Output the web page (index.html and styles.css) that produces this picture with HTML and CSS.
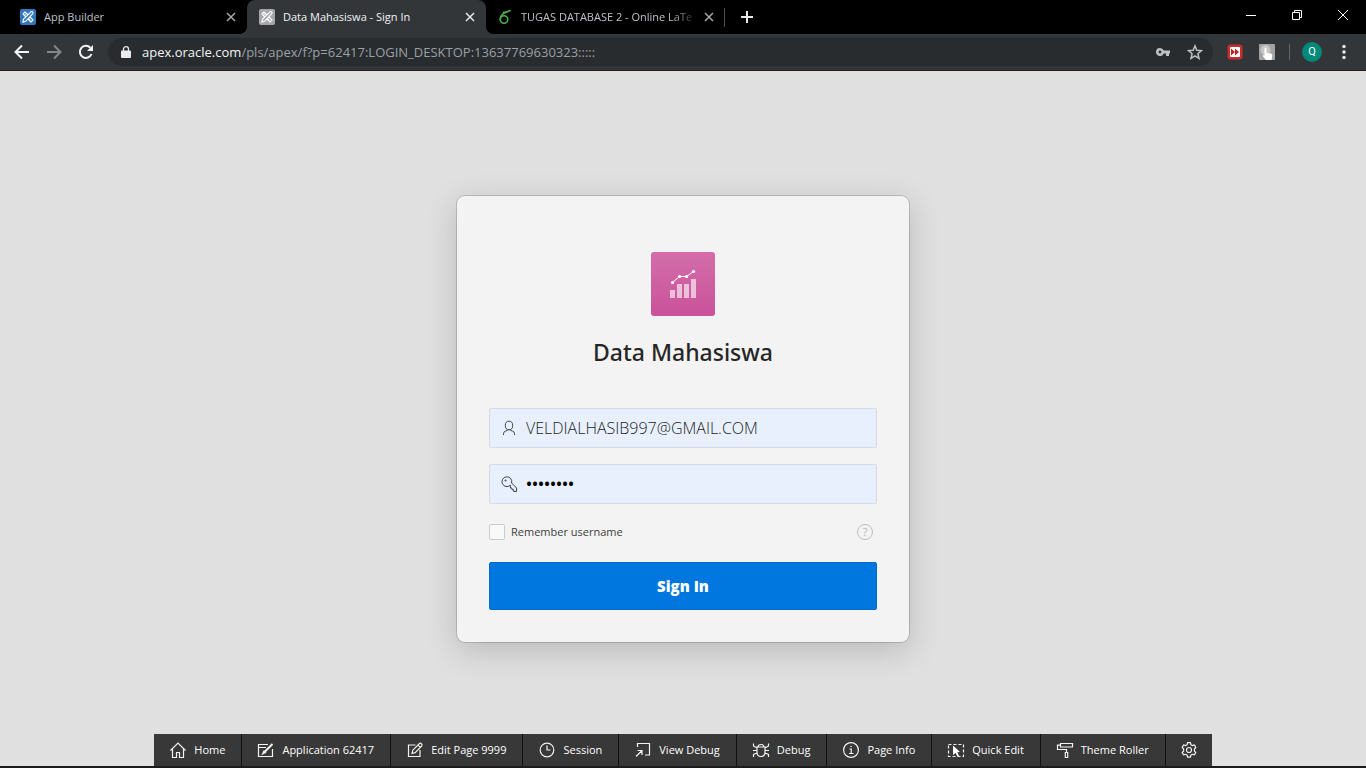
FILE: index.html
```html
<!DOCTYPE html>
<html lang="en">
<head>
<meta charset="utf-8">
<title>Data Mahasiswa - Sign In</title>
<link rel="stylesheet" href="styles.css">
</head>
<body>
<svg class="defs" aria-hidden="true">
  <defs>
    <symbol id="apex" viewBox="0 0 16 16">
      <rect width="16" height="16" rx="2" fill="currentColor"/>
      <g fill="none" stroke="#fff" stroke-width="1.1" stroke-linejoin="round">
        <path d="M3 5l2-2 8 8-2 2z"/>
        <path d="M4.6 6.4l1-1M6.600 8.400l1-1M9 11l1-1"/>
        <path fill="currentColor" d="M2.800 13.200l.8-3L11 2.800q1-.6 1.700.1t.1 1.800L5.600 12.300z"/>
      </g>
    </symbol>
    <symbol id="close" viewBox="0 0 10 10"><path d="M1 1l8 8M9 1L1 9" fill="none" stroke="currentColor" stroke-width="1.500"/></symbol>
  </defs>
</svg>
<header class="browser">
  <div class="tabstrip">
    <div class="tabs">
      <div class="tab"><svg class="favicon favicon-blue"><use href="#apex"/></svg><span class="tab-title">App Builder</span><button class="tab-close" aria-label="Close App Builder"><svg><use href="#close"/></svg></button></div>
      <div class="tab tab-active"><svg class="favicon favicon-grey"><use href="#apex"/></svg><span class="tab-title">Data Mahasiswa - Sign In</span><button class="tab-close" aria-label="Close Data Mahasiswa"><svg><use href="#close"/></svg></button></div>
      <div class="tab tab-last"><svg class="favicon" viewBox="0 0 16 16" fill="none" stroke="#4caf46" stroke-width="1.600" stroke-linecap="round"><path d="M13 1.500Q9 4 6.500 3.200M11 2.500Q3.500 4.500 3.200 10.200"/><ellipse cx="7" cy="10.500" rx="3.800" ry="3.700"/></svg><span class="tab-title tab-fade">TUGAS DATABASE 2 - Online LaTe</span><button class="tab-close" aria-label="Close TUGAS DATABASE 2"><svg><use href="#close"/></svg></button></div>
      <button class="new-tab" aria-label="New tab"><svg viewBox="0 0 12 12" fill="none" stroke="#e8eaed" stroke-width="2"><path d="M6 0v12M0 6h12"/></svg></button>
    </div>
    <div class="window-controls">
      <button aria-label="Minimize"><svg viewBox="0 0 10 10"><path d="M0 5.500h10"/></svg></button>
      <button aria-label="Restore"><svg viewBox="0 0 10 10"><path d="M.5 2.500h7v7h-7zM2.500 2.500v-2h7v7h-2"/></svg></button>
      <button aria-label="Close window"><svg viewBox="0 0 10 10"><path d="M0 0l10 10M10 0L0 10"/></svg></button>
    </div>
  </div>
  <div class="toolbar">
    <button class="nav" aria-label="Back"><svg viewBox="0 0 16 16"><path d="M15 8H2M8 1.500L1.500 8 8 14.500"/></svg></button>
    <button class="nav nav-off" aria-label="Forward"><svg viewBox="0 0 16 16"><path d="M1 8h13M8 1.500L14.500 8 8 14.500"/></svg></button>
    <button class="nav" aria-label="Reload"><svg viewBox="0 0 16 16"><path d="M13.500 10A6 6 0 1 1 12.300 3.800"/><path class="solid" d="M15 1v6H9z"/></svg></button>
    <div class="address">
      <svg class="lock" viewBox="0 0 10 12"><path d="M1 4.500h8q1 0 1 1V11q0 1-1 1H1q-1 0-1-1V5.500q0-1 1-1z" fill="#e8eaed"/><path d="M2.500 5V3a2.500 2.300 0 0 1 5 0v2" fill="none" stroke="#e8eaed" stroke-width="1.300"/></svg>
      <span class="url"><span class="host">apex.oracle.com</span>/pls/apex/f?p=62417:LOGIN_DESKTOP:13637769630323:::::</span>
      <button class="key" aria-label="Saved passwords"><svg viewBox="0 0 14 8"><path fill="#bdc1c6" fill-rule="evenodd" d="M4 0a4 4 0 0 1 3.700 2.600H14v2.800h-1V8h-3V5.400H7.700A4 4 0 1 1 4 0zm0 2.600a1.400 1.400 0 1 0 0 2.800 1.400 1.400 0 0 0 0-2.800z"/></svg></button>
      <button class="star" aria-label="Bookmark this page"><svg viewBox="0 0 16 16"><path d="M8 1.800l1.800 4.400 4.700.4-3.600 3.100 1.100 4.600L8 11.800l-4 2.500 1.100-4.600L1.500 6.600l4.700-.4z" fill="none" stroke="#bdc1c6" stroke-width="1.500"/></svg></button>
    </div>
    <div class="extensions">
      <button aria-label="Fast forward extension"><svg viewBox="0 0 16 16"><rect x=".5" y=".5" width="15" height="15" rx="3" fill="#c72d2b"/><rect x="3" y="3" width="10" height="10" rx="1" fill="#fff"/><path d="M4 4.500L8 8l-4 3.500zM8 4.500l4 3.500-4 3.500z" fill="#b7211f"/></svg></button>
      <button aria-label="Pointer extension"><svg viewBox="0 0 16 16"><rect width="16" height="16" rx="1" fill="#a2a2a2"/><circle cx="6.500" cy="6" r="5" fill="#c6c6c6"/><path d="M5.500 4q1-1 2 0v5l4.500.6q1.500.5 1.300 2L12.600 16H7l-3-3.500q-.5-1 .2-1.400l1.300.6z" fill="#fff"/></svg></button>
      <span class="divider"></span>
      <button class="avatar" aria-label="Profile">Q</button>
      <button aria-label="Menu"><svg viewBox="0 0 16 16" fill="#f1f3f4"><circle cx="8" cy="2.500" r="1.700"/><circle cx="8" cy="8" r="1.700"/><circle cx="8" cy="13.500" r="1.700"/></svg></button>
    </div>
  </div>
</header>

<main class="page">
  <section class="card">
    <svg class="logo" viewBox="0 0 64 64" aria-hidden="true">
      <defs><linearGradient id="pink" x1="0" y1="0" x2="0" y2="1"><stop offset="0" stop-color="#d46daa"/><stop offset="1" stop-color="#c9529a"/></linearGradient></defs>
      <rect width="64" height="64" rx="3" fill="url(#pink)"/>
      <path d="M19 38h5v8h-5zM26 32h5v14h-5zM33 32h5v14h-5zM40 27h5v19h-5z" fill="#fff" fill-opacity=".62"/>
      <path d="M21.500 30.500l7-6h7l7-5" fill="none" stroke="#fff"/>
      <g fill="#fff"><circle cx="21.500" cy="30.500" r="1.600"/><circle cx="28.500" cy="24.500" r="1.600"/><circle cx="35.500" cy="24.500" r="1.600"/><circle cx="42.500" cy="19.500" r="1.600"/></g>
    </svg>
    <h1>Data Mahasiswa</h1>
    <form class="login">
      <label class="field"><svg viewBox="0 0 16 16"><ellipse cx="8" cy="5.500" rx="3.700" ry="4.300"/><path d="M2.500 15v-1.300q0-2 2-2.600l1.700-.6q.8-.3.800-1.300M13.500 15v-1.300q0-2-2-2.600l-1.700-.6Q9 10.200 9 9.200"/></svg><input type="text" aria-label="Username" value="VELDIALHASIB997@GMAIL.COM"></label>
      <label class="field"><svg viewBox="0 0 16 16"><path d="M9.300 9.200A4.900 4.900 0 1 1 10.600 7l5 5v3.500h-2.800v-1.700H11v-1.700H9.500z"/><circle cx="4.500" cy="4.500" r=".6"/></svg><input class="secret" type="password" aria-label="Password" value="password"></label>
      <div class="options">
        <label class="remember"><input type="checkbox">Remember username</label>
        <button type="button" class="help" aria-label="Help">?</button>
      </div>
      <button class="submit" type="button">Sign In</button>
    </form>
  </section>
</main>

<footer class="dock">
  <nav class="devbar">
    <a href="#"><svg viewBox="0 0 16 16"><path d="M.5 8.500L8 1l7.500 7.500M2.500 7v8.500h4v-5h3v5h4V7"/></svg>Home</a>
    <a href="#"><svg viewBox="0 0 16 16"><path d="M10 2.500H.5v12h14V7M.5 5.500H8"/><path class="thick" d="M6 10.500l8.500-8.500"/><path d="M4.500 12l1.500-3 1.500 1.500z"/></svg>Application 62417</a>
    <a href="#"><svg viewBox="0 0 16 16"><path d="M8.500 3H1.500v11.500h11.500V8"/><path d="M5 11.500l.8-3.300L12.500 1.500q1-.7 2 .3t.3 2L8.200 10.600zM11 3l2.300 2.300"/></svg>Edit Page 9999</a>
    <a href="#"><svg viewBox="0 0 16 16"><circle cx="8" cy="8" r="6.800"/><path d="M8 3.500V8h3.500"/></svg>Session</a>
    <a href="#"><svg viewBox="0 0 16 16"><path d="M2.500 5V1.500h12v11.500H10M1 14.500l6-6M2.500 8.500H7V13"/></svg>View Debug</a>
    <a href="#"><svg viewBox="0 0 16 16"><path d="M4 5h8v5q0 4.500-4 4.500T4 10zM5 5q0-2.500 3-2.500T11 5M.5 1.500V4L4 6M15.500 1.500V4L12 6M0 8.500h4M12 8.500h4M.5 15v-2.500L4 11M15.500 15v-2.500L12 11"/></svg>Debug</a>
    <a href="#"><svg viewBox="0 0 16 16"><circle cx="8" cy="8" r="7.400"/><path d="M6.500 7H8.200v4.500M6 11.500h4.500M7.300 4.500h1.500"/></svg>Page Info</a>
    <a href="#"><svg viewBox="0 0 16 16"><path stroke-dasharray="3 2" d="M.5 2.500h15v12H.5z"/><path class="solid" d="M5 3.500l7 6.500-2.700.3 1.700 3.500-1.700.8-1.600-3.500L5 13z"/></svg>Quick Edit</a>
    <a href="#"><svg viewBox="0 0 16 16"><path d="M3.500 1.500h12v3.500h-12zM3.500 3.200h-3V7.500h9v3M8.300 10.500h2.400v5H8.300z"/></svg>Theme Roller</a>
    <a href="#" aria-label="Settings"><svg viewBox="0 0 16 16"><path d="M6.600.7h2.800l.5 2 1.500.9 2-.6 1.400 2.400L13.400 7v2l1.400 1.500-1.400 2.400-2-.6-1.500.9-.5 2H6.600l-.5-2-1.500-.9-2 .6-1.400-2.400L2.600 9V7L1.200 5.400 2.600 3l2 .6 1.500-.9z"/><circle cx="8" cy="8" r="2.500"/></svg></a>
  </nav>
</footer>
</body>
</html>
```
FILE: styles.css
```css
* { box-sizing: border-box; }

body {
  margin: 0;
  min-height: 100vh;
  display: flex;
  flex-direction: column;
  background: #e0e0e0;
  color: #262626;
  font: 11px/16px "Open Sans", "Noto Sans", sans-serif;
}

button {
  padding: 0;
  border: 0;
  background: none;
  color: inherit;
  font: inherit;
}

svg { display: block; flex: none; }
.defs { position: absolute; width: 0; height: 0; }

/* Browser frame */
.tabstrip {
  display: flex;
  justify-content: space-between;
  height: 34px;
  padding-left: 8px;
  background: #000;
}
.tabs { display: flex; min-width: 0; }
.tab {
  position: relative;
  display: flex;
  align-items: center;
  width: 239px;
  padding: 0 6px 0 12px;
  color: #bdc1c6;
}
.tab-last { padding-left: 11px; }
.tab-last::after {
  content: "";
  position: absolute;
  right: 0;
  top: 8px;
  height: 19px;
  width: 1px;
  background: #4a4c50;
}
.tab-active {
  border-radius: 8px 8px 0 0;
  background: #323639;
  color: #f1f3f4;
}
.tab-active::before,
.tab-active::after {
  content: "";
  position: absolute;
  bottom: 0;
  width: 8px;
  height: 8px;
}
.tab-active::before {
  right: 100%;
  background: radial-gradient(circle at 0 0, transparent 8px, #323639 8px);
}
.tab-active::after {
  left: 100%;
  background: radial-gradient(circle at 100% 0, transparent 8px, #323639 8px);
}
.favicon { width: 16px; height: 16px; margin-right: 8px; }
.favicon-blue { color: #2f78bd; }
.favicon-grey { color: #a4a7aa; }
.tab-title { flex: 1; white-space: nowrap; }
.tab-fade { mask-image: linear-gradient(to right, #000 84%, transparent); }
.tab-close { padding: 5px; color: #a5a8ac; }
.tab-close svg { width: 10px; height: 10px; }
.tab-active .tab-close { color: #e8eaed; }
.new-tab { padding: 0 16px; }
.new-tab svg { width: 12px; height: 12px; }
.window-controls { display: flex; }
.window-controls button {
  display: grid;
  place-items: center;
  width: 46px;
  height: 29px;
}
.window-controls svg {
  width: 10px;
  height: 10px;
  overflow: visible;
  fill: none;
  stroke: #fff;
}

.toolbar {
  display: flex;
  align-items: center;
  height: 37px;
  padding: 0 6px;
  border-bottom: 1px solid #231f20;
  background: #323639;
}
.nav { width: 32px; height: 32px; display: grid; place-items: center; color: #f1f3f4; }
.nav svg { width: 16px; height: 16px; fill: none; stroke: currentColor; stroke-width: 2; }
.nav-off { color: #85888b; }
.nav .solid { fill: currentColor; stroke: none; }
.address {
  display: flex;
  flex: 1;
  align-items: center;
  min-width: 0;
  height: 28px;
  margin-left: 6px;
  padding: 0 10px 0 13px;
  border-radius: 14px;
  background: #282c2f;
  color: #9aa0a6;
}
.lock { width: 10px; height: 12px; margin-right: 11px; }
.url {
  flex: 1;
  overflow: hidden;
  font-size: 13px;
  white-space: nowrap;
}
.host { color: #f1f3f4; }
.key svg { width: 14px; height: 8px; }
.star { margin-left: 17px; }
.star svg { width: 16px; height: 16px; }
.extensions { display: flex; align-items: center; gap: 16px; margin-left: 14px; }
.extensions svg { width: 16px; height: 16px; }
.extensions button:last-child { margin: 0 8px 0 -2px; }
.divider { width: 1px; height: 16px; margin: 0 -4px 0 -2px; background: #62666a; }
.avatar {
  width: 20px;
  height: 20px;
  border-radius: 50%;
  background: #00897b;
  color: #fff;
  font-family: Roboto, sans-serif;
}

/* Sign-in page; the top padding balances the developer toolbar below */
.page { flex: 1; display: grid; place-items: center; padding-top: 32px; }
.card {
  display: flex;
  flex-direction: column;
  align-items: center;
  width: 100%;
  max-width: 452px;
  padding: 56px 32px 32px;
  border-radius: 8px;
  background: #f3f3f3;
  box-shadow: 0 0 0 1px rgba(0, 0, 0, .15), 0 8px 32px rgba(0, 0, 0, .18);
}
.logo { width: 64px; height: 64px; }
h1 {
  margin: 20px 0 40px;
  font: 500 23px/32px "Noto Sans", "Open Sans", sans-serif;
}
.login { align-self: stretch; display: flex; flex-direction: column; gap: 16px; }
.field {
  display: flex;
  align-items: center;
  gap: 9px;
  height: 40px;
  padding: 0 11px;
  border: 1px solid #d6dae2;
  border-radius: 2px;
  background: #e8f0fe;
}
.field svg { width: 16px; height: 16px; overflow: visible; fill: none; stroke: #3c424d; }
.field input {
  flex: 1;
  min-width: 0;
  padding: 0;
  border: 0;
  outline: 0;
  background: none;
  color: #1c1e22;
  font: 300 16px/24px "Open Sans", "Noto Sans", sans-serif;
}
.field .secret { color: #000; font-weight: 600; }
.options {
  display: flex;
  justify-content: space-between;
  align-items: center;
  height: 24px;
  margin-bottom: 2px;
  padding-right: 4px;
}
.remember { display: flex; align-items: center; gap: 6px; color: #404040; }
.remember input {
  appearance: none;
  width: 16px;
  height: 16px;
  margin: 0;
  border: 1px solid #ccc;
  border-radius: 2px;
  background: #f9f9f9;
}
.help {
  width: 16px;
  height: 16px;
  border: 1px solid #bdbdbd;
  border-radius: 50%;
  color: #b5b5b5;
  line-height: 14px;
}
.submit {
  height: 48px;
  border: 1px solid #006bcc;
  border-radius: 2px;
  background: #0076df;
  color: #fff;
  font-size: 15px;
  font-weight: 800;
}

/* Developer toolbar */
.dock {
  display: flex;
  justify-content: center;
  border-bottom: 2px solid #1d1b1c;
}
.devbar { display: flex; background: #383838; }
.devbar a {
  display: flex;
  align-items: center;
  gap: 8px;
  height: 32px;
  padding: 0 16px;
  border-right: 1px solid #111;
  color: #fff;
  text-decoration: none;
  white-space: nowrap;
}
.devbar a:last-child { padding: 0 15px; border: 0; }
.devbar svg { width: 16px; height: 16px; overflow: visible; fill: none; stroke: #f2f2f2; stroke-width: 1.2; }
.devbar .solid { fill: #fff; stroke: none; }
.devbar .thick { stroke-width: 2; }
```
